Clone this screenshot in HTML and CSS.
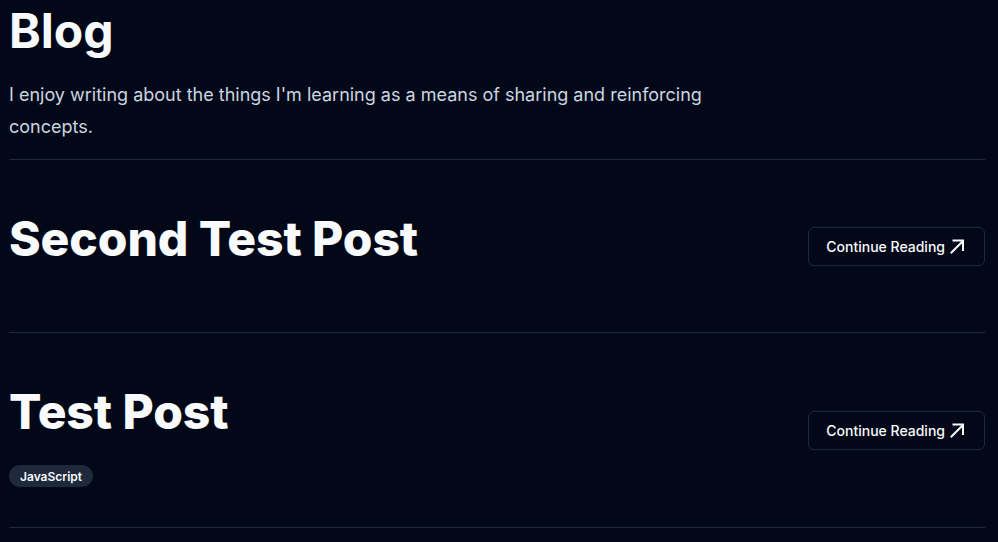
FILE: index.html
```html
<!DOCTYPE html>
<html lang="en">
<head>
<meta charset="utf-8">
<title>Blog</title>
<link rel="stylesheet" href="styles.css">
</head>
<body>
<main class="page">
  <header class="intro">
    <h1 class="page-title">Blog</h1>
    <p class="lead">I enjoy writing about the things I'm learning as a means of sharing and reinforcing concepts.</p>
  </header>
  <ul class="posts">
    <li class="post">
      <div class="post-main">
        <h2 class="post-title">Second Test Post</h2>
        <div class="tags"></div>
      </div>
      <a class="btn" href="#">Continue Reading
        <svg class="btn-icon" width="20" height="20" viewBox="0 0 20 20" fill="none" stroke="currentColor" stroke-width="2" stroke-linecap="square"><path d="M2.5 16.5 13 6"/><path d="M4.5 4.5h9.5v9.5"/></svg>
      </a>
    </li>
    <li class="post">
      <div class="post-main">
        <h2 class="post-title">Test Post</h2>
        <div class="tags"><span class="badge">JavaScript</span></div>
      </div>
      <a class="btn" href="#">Continue Reading
        <svg class="btn-icon" width="20" height="20" viewBox="0 0 20 20" fill="none" stroke="currentColor" stroke-width="2" stroke-linecap="square"><path d="M2.5 16.5 13 6"/><path d="M4.5 4.5h9.5v9.5"/></svg>
      </a>
    </li>
  </ul>
</main>
</body>
</html>
```
FILE: styles.css
```css
* { box-sizing: border-box; }
html, body {
  margin: 0;
  background: #020817;
  color: #f8fafc;
  font-family: Inter, "Noto Sans", sans-serif;
}
.page {
  margin: 0 13px 0 9px;
  padding-top: 7px;
}
.intro {
  padding-bottom: 16px;
  border-bottom: 1px solid #1e293b;
}
.page-title {
  margin: 0;
  font-size: 48px;
  line-height: 48px;
  font-weight: 700;
}
.lead {
  margin: 24px 0 0;
  max-width: 768px;
  font-size: 18px;
  line-height: 32px;
  color: #cbd5e1;
}
.posts {
  list-style: none;
  margin: 0;
  padding: 0;
}
.post {
  display: flex;
  align-items: center;
  justify-content: space-between;
  padding: 40px 0;
  border-bottom: 1px solid #1e293b;
}
.post-main {
  display: flex;
  flex-direction: column;
}
.post-title {
  margin: 15px 0 0;
  font-size: 48px;
  line-height: 48px;
  font-weight: 800;
  letter-spacing: -0.1px;
}
.tags {
  display: flex;
  gap: 8px;
  margin-top: 29px;
}
.badge {
  display: inline-flex;
  align-items: center;
  height: 22px;
  padding: 0 10px;
  border-radius: 999px;
  background: #1e293b;
  border: 1px solid transparent;
  font-size: 12px;
  font-weight: 600;
  color: #f8fafc;
}
.btn {
  display: inline-flex;
  align-items: center;
  height: 39px;
  padding: 0 15px 0 17px;
  border: 1px solid #1e293b;
  border-radius: 6px;
  color: #f8fafc;
  text-decoration: none;
  font-size: 14px;
  font-weight: 500;
}
.btn-icon {
  margin-left: 4px;
}
```
